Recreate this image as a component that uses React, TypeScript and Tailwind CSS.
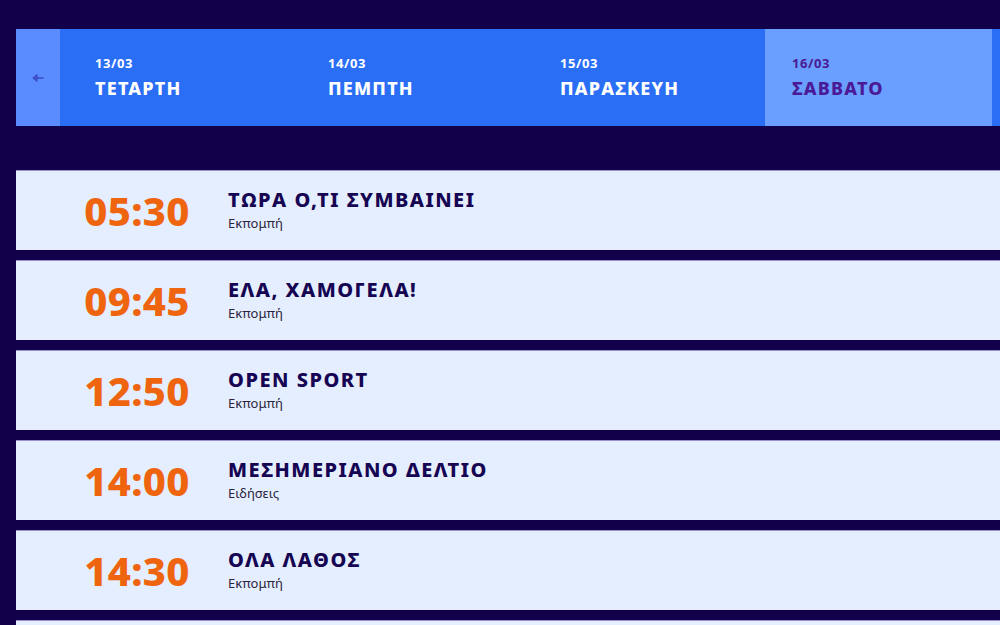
import * as React from 'react';

const days = [
    {date: '13/03', name: 'ΤΕΤΑΡΤΗ', width: 'w-[232px]', pad: 'pl-[35px]'},
    {date: '14/03', name: 'ΠΕΜΠΤΗ', width: 'w-[232px]', pad: 'pl-[36px]'},
    {date: '15/03', name: 'ΠΑΡΑΣΚΕΥΗ', width: 'w-[241px]', pad: 'pl-[36px]'},
    {date: '16/03', name: 'ΣΑΒΒΑΤΟ', width: 'w-[227px]', pad: 'pl-[27px]', active: true},
    {date: '17/03', name: 'ΚΥΡΙΑΚΗ', width: 'w-[232px]', pad: 'pl-[35px]'},
];

const shows = [
    {time: '05:30', title: 'ΤΩΡΑ Ο,ΤΙ ΣΥΜΒΑΙΝΕΙ', kind: 'Εκπομπή'},
    {time: '09:45', title: 'ΕΛΑ, ΧΑΜΟΓΕΛΑ!', kind: 'Εκπομπή'},
    {time: '12:50', title: 'OPEN SPORT', kind: 'Εκπομπή'},
    {time: '14:00', title: 'ΜΕΣΗΜΕΡΙΑΝΟ ΔΕΛΤΙΟ', kind: 'Ειδήσεις'},
    {time: '14:30', title: 'ΟΛΑ ΛΑΘΟΣ', kind: 'Εκπομπή'},
    {time: '15:30', title: 'ΤΗΛΕΟΡΑΣΗ', kind: 'Εκπομπή'},
];

const DayTab = ({date, name, width, pad, active}) => (
    <button
        type="button"
        className={`${width} ${pad} shrink-0 h-full flex flex-col justify-center text-left ${
            active ? 'bg-[#6a9fff] text-[#4a1a96]' : 'bg-[#2a6ef6] text-white'
        }`}
    >
        <span className="text-[13px] font-bold leading-4 tracking-[0.6px]">{date}</span>
        <span className="text-[18px] font-extrabold leading-6 mt-[5px] tracking-[1.2px]">{name}</span>
    </button>
);

const ShowRow = ({time, title, kind}) => (
    <div className="h-[80px] shrink-0 bg-[#e5eefe] border-t border-[#9a90d0] flex items-center">
        <div className="w-[142px] ml-[50px] text-center text-[40px] font-extrabold text-[#ee640f] leading-none tracking-[0.3px]">
            {time}
        </div>
        <div className="ml-[20px] flex flex-col -mt-[2px]">
            <span className="text-[20px] font-extrabold text-[#150552] leading-6 tracking-[1.5px]">{title}</span>
            <span className="text-[13px] text-[#2a2440] leading-4 mt-[3px]">{kind}</span>
        </div>
    </div>
);

const App = () => {
    return (
        <div
            className="w-[1000px] h-[625px] overflow-hidden bg-[#13004b] pt-[29px] pl-[16px]"
            style={{fontFamily: '"Noto Sans", "Open Sans", "DejaVu Sans", sans-serif'}}
        >
            <div className="h-[97px] flex overflow-hidden">
                <button type="button" className="w-[44px] shrink-0 h-full bg-[#5a8cff] flex items-center justify-center">
                    <svg width="12" height="10" viewBox="0 0 12 10" fill="none">
                        <path d="M5.5 1.5 L1.5 5 L5.5 8.5" stroke="#3b4cc4" strokeWidth="1.6" />
                        <path d="M2 5 H11.5" stroke="#3b4cc4" strokeWidth="1.6" />
                        <path d="M5 3 V7" stroke="#3b4cc4" strokeWidth="1.4" />
                    </svg>
                </button>
                {days.map((d) => (
                    <DayTab key={d.date} {...d} />
                ))}
            </div>
            <div className="mt-[44px] flex flex-col gap-[10px]">
                {shows.map((s) => (
                    <ShowRow key={s.time} {...s} />
                ))}
            </div>
        </div>
    );
};

export default App;
